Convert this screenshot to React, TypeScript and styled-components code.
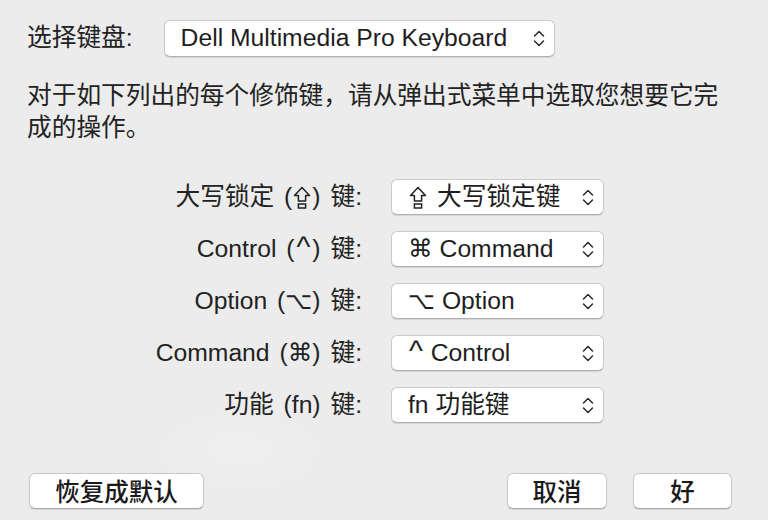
import React from "react";
import styled, { createGlobalStyle } from "styled-components";

const Global = createGlobalStyle`
  html, body { margin: 0; padding: 0; background: #ffffff; }
  body {
    font-family: "Liberation Sans", "Noto Sans CJK SC", "DejaVu Sans", sans-serif;
    color: #222222;
  }
`;

const Window = styled.div`
  width: 768px;
  height: 520px;
  box-sizing: border-box;
  background: radial-gradient(ellipse 80px 40px at 240px 450px, #efefef 0%, #ececec 100%), #ececec;
  display: flex;
  flex-direction: column;
  padding: 20px 0 11px 27px;
  font-size: 24.7px;
`;

const KeyboardRow = styled.div`
  display: flex;
  align-items: center;
  gap: 31px;
`;

const Label = styled.span`
  color: #222;
  line-height: 1;
  white-space: nowrap;
`;

const Popup = styled.div<{ $width: number; $height: number }>`
  width: ${(p) => p.$width}px;
  height: ${(p) => p.$height}px;
  box-sizing: border-box;
  display: flex;
  align-items: center;
  justify-content: space-between;
  padding: 0 9px 0 16px;
  background: #ffffff;
  border: 1px solid #cbcbcb;
  border-bottom-color: #b0b0b0;
  border-radius: 6px;
  box-shadow: 0 1px 1px rgba(0, 0, 0, 0.1);
  color: #1e1e1e;
  white-space: nowrap;
`;

const PopupText = styled.span`
  line-height: 1;
  white-space: pre;
`;

const Paragraph = styled.p`
  margin: 23px 0 0 0;
  width: 710px;
  line-height: 32px;
  color: #222;
`;

const Grid = styled.div`
  display: grid;
  grid-template-columns: 335px 213px;
  column-gap: 29px;
  row-gap: 16px;
  margin-top: 35px;
  align-items: center;
`;

const RowLabel = styled.span`
  display: block;
  text-align: right;
  white-space: pre;
  line-height: 1;
  word-spacing: 3px;
  color: #222;
`;

const Sym = styled.span<{ $scale: number; $pad?: number; $family?: string }>`
  font-family: ${(p) => p.$family ?? '"DejaVu Sans"'}, sans-serif;
  font-size: ${(p) => p.$scale}em;
  line-height: 0;
  padding: 0 ${(p) => p.$pad ?? 0}px;
  word-spacing: 0;
`;

const CapsSvg = styled.svg<{ $after: number }>`
  display: inline-block;
  vertical-align: -5px;
  margin: 0 ${(p) => p.$after}px 0 1px;
`;

const Footer = styled.div`
  margin-top: auto;
  display: flex;
  align-items: center;
  padding: 0 36px 0 2px;
`;

const Spacer = styled.div`
  flex: 1;
`;

const Button = styled.button<{ $width: number }>`
  width: ${(p) => p.$width}px;
  height: 36px;
  box-sizing: border-box;
  background: #ffffff;
  border: 1px solid #c8c8c8;
  border-bottom-color: #a8a8a8;
  border-radius: 6px;
  box-shadow: 0 1px 1px rgba(0, 0, 0, 0.1);
  font-family: "Noto Sans CJK SC", sans-serif;
  font-size: 24.5px;
  font-weight: 500;
  color: #1a1a1a;
  padding: 0;
  line-height: 1;
  display: flex;
  align-items: center;
  justify-content: center;
`;

const ButtonGroup = styled.div`
  display: flex;
  gap: 26px;
`;

const Chevrons = () => (
  <svg width="12" height="19" viewBox="0 0 12 19" fill="none">
    <path d="M1.5 7 L6 2.5 L10.5 7" stroke="#2a2a2a" strokeWidth="1.5" strokeLinecap="round" strokeLinejoin="round" />
    <path d="M1.5 12 L6 16.5 L10.5 12" stroke="#2a2a2a" strokeWidth="1.5" strokeLinecap="round" strokeLinejoin="round" />
  </svg>
);

const CapsIcon = ({ after }: { after: number }) => (
  <CapsSvg $after={after} width="18" height="24" viewBox="0 0 18 24" fill="none">
    <path
      d="M9 1.5 L16.5 9.5 L12.6 9.5 L12.6 15 L5.4 15 L5.4 9.5 L1.5 9.5 Z"
      stroke="#222"
      strokeWidth="1.5"
      strokeLinejoin="round"
    />
    <rect x="5.4" y="18" width="7.2" height="4" stroke="#222" strokeWidth="1.5" />
  </CapsSvg>
);

const Cmd = () => <Sym $scale={1.0}>⌘</Sym>;
const Ctrl = ({ pad }: { pad: number }) => (
  <Sym $scale={1.2} $pad={pad} $family='"Liberation Sans"'>
    ^
  </Sym>
);
const Opt = () => <Sym $scale={0.95}>⌥</Sym>;

type Row = { label: React.ReactNode; value: React.ReactNode; key: string };

const rows: Row[] = [
  {
    key: "caps",
    label: (
      <>
        大写锁定 (<CapsIcon after={1} />) 键:
      </>
    ),
    value: (
      <>
        <CapsIcon after={10} />
        大写锁定键
      </>
    ),
  },
  {
    key: "ctrl",
    label: (
      <>
        Control (<Ctrl pad={2} />) 键:
      </>
    ),
    value: (
      <>
        <Cmd /> Command
      </>
    ),
  },
  {
    key: "opt",
    label: (
      <>
        Option (<Opt />) 键:
      </>
    ),
    value: (
      <>
        <Opt /> Option
      </>
    ),
  },
  {
    key: "cmd",
    label: (
      <>
        Command (<Cmd />) 键:
      </>
    ),
    value: (
      <>
        <Ctrl pad={1} /> Control
      </>
    ),
  },
  {
    key: "fn",
    label: <>功能 (fn) 键:</>,
    value: <>fn 功能键</>,
  },
];

export default function App() {
  return (
    <>
      <Global />
      <Window>
        <KeyboardRow>
          <Label>选择键盘:</Label>
          <Popup $width={391} $height={37}>
            <PopupText>Dell Multimedia Pro Keyboard</PopupText>
            <Chevrons />
          </Popup>
        </KeyboardRow>
        <Paragraph>
          对于如下列出的每个修饰键，请从弹出式菜单中选取您想要它完成的操作。
        </Paragraph>
        <Grid>
          {rows.map((r) => (
            <React.Fragment key={r.key}>
              <RowLabel>{r.label}</RowLabel>
              <Popup $width={213} $height={36}>
                <PopupText>{r.value}</PopupText>
                <Chevrons />
              </Popup>
            </React.Fragment>
          ))}
        </Grid>
        <Footer>
          <Button $width={175}>恢复成默认</Button>
          <Spacer />
          <ButtonGroup>
            <Button $width={100}>取消</Button>
            <Button $width={99}>好</Button>
          </ButtonGroup>
        </Footer>
      </Window>
    </>
  );
}
